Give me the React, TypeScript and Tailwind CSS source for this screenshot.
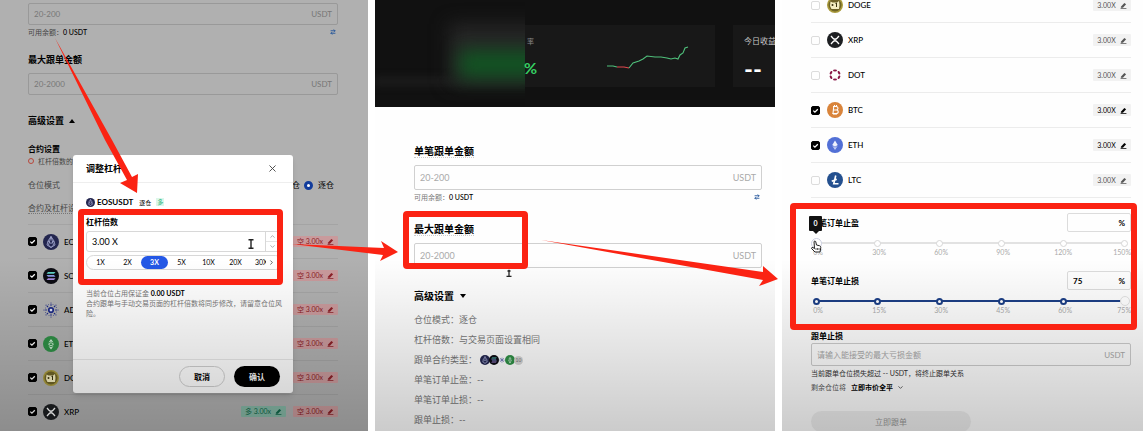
import React from 'react';
import { X, ChevronUp, ChevronDown, ChevronRight, ArrowRightLeft } from 'lucide-react';

const pinned = 'absolute pointer-events-none';

function CoinIcon({ name, className }: { name: string; className: string }) {
  const art: Record<string, React.ReactNode> = {
    EOS: (
      <>
        <circle cx="16" cy="16" r="16" fill="#23264f" />
        <path d="M16 5l-6 9-2 8 8 5 8-5-2-8zM16 5l-5 17 5 5 5-5zM10 14l6 5 6-5" fill="none" stroke="#a9aed6" strokeWidth="1.6" />
      </>
    ),
    SOL: (
      <>
        <circle cx="16" cy="16" r="16" fill="#0b0b12" />
        <path d="M10 8h15l-3 3.500H7z" fill="#5fd0c5" />
        <path d="M7 14.200h15l3 3.500H10z" fill="#8a9be8" />
        <path d="M10 20.500h15l-3 3.500H7z" fill="#a98be0" />
      </>
    ),
    ADA: (
      <g fill="#1c2a86">
        <circle cx="16" cy="16" r="4.500" fill="#dfe3f5" stroke="#1c2a86" strokeWidth="3.500" />
        {[0, 45, 90, 135, 180, 225, 270, 315].map((a) => (
          <g key={a} transform={`rotate(${a} 16 16)`}>
            <circle cx="16" cy="6" r="1.600" />
            <circle cx="16" cy="2" r="1.100" />
            <circle cx="20" cy="5" r="0.900" />
          </g>
        ))}
      </g>
    ),
    ETC: (
      <>
        <circle cx="16" cy="16" r="16" fill="#2f8f46" />
        <path d="M16 6l5 7-5-2-5 2zM11 15l5-2.500 5 2.500v3l-5 2.500-5-2.500zM11 20l5 7 5-7-5 2.500z" fill="#cfeed6" />
        <path d="M13 15.500l3-1 3 1v2l-3 1.200-3-1.200z" fill="#2f8f46" />
      </>
    ),
    DOGE: (
      <>
        <circle cx="16" cy="16" r="16" fill="#a99a3c" />
        <circle cx="16" cy="16" r="13" fill="#6f6427" />
        <path d="M7 9l4 2h9l4-3 1 8-1 8H9l-3-6z" fill="#f5efc0" />
        <circle cx="11" cy="16" r="2" fill="#3b340f" />
        <path d="M17 13l2-1v8" fill="none" stroke="#3b340f" strokeWidth="2" />
      </>
    ),
    XRP: (
      <>
        <circle cx="16" cy="16" r="16" fill="#1d1f22" />
        <path d="M8 8l4 4.500q4 4 8 0L24 8M8 24l4-4.500q4-4 8 0l4 4.500" fill="none" stroke="#fff" strokeWidth="2.600" />
      </>
    ),
    DOT: (
      <g fill="#8a1747">
        <ellipse cx="16" cy="7" rx="4" ry="2.200" />
        <ellipse cx="16" cy="25" rx="4" ry="2.200" />
        <ellipse cx="8" cy="11.500" rx="2.200" ry="3.800" transform="rotate(30 8 11.500)" />
        <ellipse cx="24" cy="11.500" rx="2.200" ry="3.800" transform="rotate(-30 24 11.500)" />
        <ellipse cx="8" cy="20.500" rx="2.200" ry="3.800" transform="rotate(-30 8 20.500)" />
        <ellipse cx="24" cy="20.500" rx="2.200" ry="3.800" transform="rotate(30 24 20.500)" />
      </g>
    ),
    BTC: (
      <>
        <circle cx="16" cy="16" r="16" fill="#d9843b" />
        <path d="M12 9h6q4 0 4 3.500T18 16h-5 5.500q4 0 4 3.500T18 23h-7.500M13.500 9l-1.500 14M15 6v3M19 6v3M14 23v3M18 23v3" fill="none" stroke="#fff" strokeWidth="2.200" />
      </>
    ),
    ETH: (
      <>
        <circle cx="16" cy="16" r="16" fill="#5270d6" />
        <path d="M16 7l5.500 9L16 19.500 10.500 16z" fill="#eef1fd" />
        <path d="M16 26l5.500-8.500L16 21l-5.500-3.500z" fill="#c5cff5" />
      </>
    ),
    LTC: (
      <>
        <circle cx="16" cy="16" r="16" fill="#24508f" />
        <path d="M17.500 7l-4 16.500H23M9.500 18.500l10-4" fill="none" stroke="#fff" strokeWidth="3.200" />
      </>
    ),
  };
  return (
    <svg viewBox="0 0 32 32" className={`shrink-0 ${className}`} aria-hidden="true">
      {art[name]}
    </svg>
  );
}

function Pencil() {
  return (
    <svg viewBox="0 0 12 12" className="size-[7px] shrink-0" aria-hidden="true">
      <path d="M1.500 8L7.500 1.500l3 2.500L5 10H1.500z" fill="currentColor" />
      <path d="M1 11.300h10" stroke="currentColor" strokeWidth="1.400" />
    </svg>
  );
}

function Tick({ label, checked }: { label: string; checked: boolean }) {
  return (
    <span className="relative flex size-[9px] shrink-0">
      <input
        type="checkbox"
        aria-label={label}
        defaultChecked={checked}
        className="peer size-[9px] appearance-none rounded-[2px] border border-[#dcdcdc] checked:border-black checked:bg-black"
      />
      <svg viewBox="0 0 9 9" className="pointer-events-none absolute inset-0 hidden size-[9px] peer-checked:block" aria-hidden="true">
        <path d="M2.300 4.600l1.600 1.500 2.900-2.900" fill="none" stroke="#fff" strokeWidth="1.300" />
      </svg>
    </span>
  );
}

function AmountField({ id, hint, className }: { id: string; hint: string; className: string }) {
  return (
    <div className={`flex items-center rounded-[2px] border px-[5px] ${className}`}>
      <input id={id} placeholder={hint} className="min-w-0 flex-1 bg-transparent outline-none placeholder:text-inherit" />
      <span>USDT</span>
    </div>
  );
}

function Balance() {
  return (
    <div className="flex h-[14px] items-center justify-between text-[7px]">
      <span>
        可用余额：<span className="font-medium text-black">0 USDT</span>
      </span>
      <ArrowRightLeft className="mr-[2px] size-[6px] text-[#20539a]" strokeWidth={3.5} />
    </div>
  );
}

function Shade() {
  return <div className={`${pinned} inset-x-0 bottom-0 h-2/5 bg-linear-to-b from-transparent to-black/20`} />;
}

const LEFT_COINS = ['EOS', 'SOL', 'ADA', 'ETC', 'DOGE', 'XRP'];
const LEVERS = ['1X', '2X', '3X', '5X', '10X', '20X'];

function LeverageDialog() {
  return (
    <div
      role="dialog"
      aria-label="调整杠杆"
      className="absolute top-[155px] left-[73px] flex h-[238px] w-[220px] flex-col rounded-[3px] bg-white text-black shadow-md"
    >
      <header className="flex h-[28px] items-center justify-between border-b border-[#eeeeee] pr-[15px] pl-[13px]">
        <h2 className="text-[9px] font-bold">调整杠杆</h2>
        <button aria-label="关闭" className="text-[#444]">
          <X className="size-[11px]" strokeWidth={2} />
        </button>
      </header>
      <div className="flex-1 pr-[10px] pl-[13px]">
        <div className="mt-[12px] flex h-[14px] items-center text-[8px]">
          <CoinIcon name="EOS" className="size-[9px]" />
          <b className="ml-[2px]">EOSUSDT</b>
          <span className="ml-[6px] text-[6px]">逐仓</span>
          <span className="ml-[5px] bg-[#dcf7ea] px-px text-[6px] leading-[8px] text-[#2db57b]">多</span>
        </div>
        <label htmlFor="lever" className="mt-[6px] block h-[14px] text-[8px] leading-[14px] font-bold">
          杠杆倍数
        </label>
        <div className="mt-[2px] flex h-[21px] rounded-[3px] border border-[#d8d8d8]">
          <input id="lever" defaultValue="3.00 X" className="min-w-0 flex-1 pl-[5px] text-[9px] outline-none" />
          <div className="flex w-[17px] flex-col border-l border-[#d8d8d8] pr-[3px] text-[#777]">
            <button aria-label="增加" className="flex flex-1 items-center justify-center border-b border-[#e4e4e4]">
              <ChevronUp className="size-[7px]" />
            </button>
            <button aria-label="减少" className="flex flex-1 items-center justify-center">
              <ChevronDown className="size-[7px]" />
            </button>
          </div>
        </div>
        <div className="mt-[3px] flex h-[15px] items-center overflow-hidden rounded-full border border-[#d8d8d8] text-[7px]">
          {LEVERS.map((l) => (
            <button
              key={l}
              className={`h-[13px] w-[27px] shrink-0 rounded-full ${l === '3X' ? 'bg-[#2458e6] font-bold text-white' : ''}`}
            >
              {l}
            </button>
          ))}
          <button className="ml-[6px] w-[11px] shrink-0 overflow-hidden whitespace-nowrap">30X</button>
          <ChevronRight className="ml-[2px] size-[7px] shrink-0" />
        </div>
        <div className="mt-[18px] text-[7px] leading-[10px] text-[#777]">
          <p>
            当前仓位占用保证金 <b className="text-black">0.00 USDT</b>
          </p>
          <p>合约跟单与手动交易页面的杠杆倍数将同步修改，请留意仓位风险。</p>
        </div>
      </div>
      <footer className="flex h-[34px] items-center justify-end gap-[9px] border-t border-[#e8e8e8] pr-[13px] text-[8px] font-bold">
        <button className="h-[21px] w-[46px] rounded-full border border-[#cfcfcf]">取消</button>
        <button className="h-[21px] w-[46px] rounded-full bg-black text-white">确认</button>
      </footer>
    </div>
  );
}

function LeftPanel() {
  return (
    <section className="relative overflow-hidden bg-[#b0b0b0] pr-[30px] pl-[28px] text-[8px] text-[#444]">
      <AmountField id="l-single" hint="20-200" className="mt-[3px] h-[22px] border-[#999] text-[#777]" />
      <Balance />
      <label htmlFor="l-max" className="mt-[14px] block h-[14px] text-[9px] leading-[14px] font-bold text-black">
        最大跟单金额
      </label>
      <AmountField id="l-max" hint="20-2000" className="mt-[6px] h-[22px] border-[#999] text-[#777]" />
      <button className="mt-[19px] flex h-[14px] items-center gap-[5px] text-[9px] font-bold text-black">
        高级设置
        <svg viewBox="0 0 6 4" className="h-[4px] w-[6px]" aria-hidden="true">
          <path d="M0 4L3 0l3 4z" />
        </svg>
      </button>
      <h3 className="mt-[14px] h-[14px] leading-[14px] font-bold text-black">合约设置</h3>
      <p className="flex h-[10px] items-center gap-[4px] text-[7px] whitespace-nowrap">
        <span className="size-[6px] shrink-0 rounded-full border border-[#b8483c]" />
        杠杆倍数的
      </p>
      <div className="mt-[12px] flex h-[14px] items-center justify-between">
        <span>仓位模式</span>
        <span className="flex items-center gap-[4px] pr-[4px] text-black">
          <label className="flex items-center gap-[4px]">
            <input type="radio" name="mode" className="size-[9px] appearance-none rounded-full border border-[#777]" />
            全仓
          </label>
          <label className="flex items-center gap-[5px]">
            <input
              type="radio"
              name="mode"
              defaultChecked
              className="size-[9px] appearance-none rounded-full border-[3px] border-[#123c9c] bg-white"
            />
            逐仓
          </label>
        </span>
      </div>
      <p className="mt-[9px] h-[14px] leading-[14px]">
        <span className="border-b border-dotted border-[#777]">合约及杠杆设</span>
      </p>
      <ul className="mt-[9px]">
        {LEFT_COINS.map((c) => (
          <li key={c} className="flex h-[34px] items-center border-t border-[#a4a4a4] text-black">
            <Tick label={c} checked />
            <CoinIcon name={c} className="ml-[6px] size-[16px]" />
            <span className="ml-[5px] font-medium">{c}</span>
            <span className="ml-auto flex gap-[7px] text-[7px]">
              {c === 'XRP' && (
                <button className="flex h-[11px] w-[45px] items-center justify-center gap-[4px] rounded-[1px] bg-[#86b8a6] text-[#11684a]">
                  多 3.00x <Pencil />
                </button>
              )}
              <button className="flex h-[11px] w-[45px] items-center justify-center gap-[4px] rounded-[1px] bg-[#c99a9c] text-[#8c2027]">
                空 3.00x <Pencil />
              </button>
            </span>
          </li>
        ))}
      </ul>
      <LeverageDialog />
      <Shade />
      <svg viewBox="0 0 6 10" className={`${pinned} top-[239px] left-[248px] h-[10px] w-[6px]`} aria-hidden="true">
        <path d="M0.500 0.700h5M0.500 9.300h5M3 0.700v8.600" stroke="#222" strokeWidth="1.400" />
      </svg>
      <div className={`${pinned} top-[209px] left-[78px] h-[76px] w-[205px] rounded-[4px] border-[6px] border-[#fb2313]`} />
    </section>
  );
}

function MiddlePanel() {
  return (
    <section className="relative bg-[#fefefe] text-[9px] text-[#777]">
      <header className="relative flex h-[107px] gap-[18px] overflow-hidden bg-[#111111] pt-[25px] whitespace-nowrap">
        <div className="relative h-[62px] flex-1 bg-[#181818]">
          <div className="absolute -top-[25px] left-0 h-[107px] w-[150px] overflow-hidden bg-[#111111]">
            <div className="absolute top-[76px] left-0 h-[11px] w-full bg-[#1a1a1a] blur-[3px]" />
            <div className="absolute top-[24px] left-[74px] h-[60px] w-[96px] bg-[#262626] blur-[9px]" />
            <div className="absolute top-[50px] left-[84px] h-[28px] w-[90px] bg-[#125423] blur-[9px]" />
          </div>
          <span className="absolute top-[10px] left-[152px] text-[7px] leading-[12px] text-[#888]">率</span>
          <span className="absolute top-[34px] left-[149px] text-[16px] leading-[18px] font-bold text-[#35d063]">%</span>
          <svg viewBox="0 0 82 26" className="absolute top-[20px] right-[26px] h-[26px] w-[82px]" fill="none" strokeWidth="1.100" aria-hidden="true">
            <path d="M0 21l6 0 4 1" stroke="#4fc07b" />
            <path d="M10 22l7 0 5 1" stroke="#e0484e" />
            <path d="M22 23l4-5 6-2 4-2 4-3 8 1 6 0 6 1 4 1 4-1 3 1 2-4 3-2 2-5 3-1" stroke="#4fc07b" />
          </svg>
        </div>
        <div className="h-[62px] w-[42px] overflow-hidden bg-[#181818] pt-[9px] pl-[11px]">
          <p className="text-[8px] leading-[14px] text-[#c8c8c8]">今日收益</p>
          <p className="mt-[12px] flex text-[24px] leading-[18px] font-bold text-white">--</p>
        </div>
      </header>
      <div className="pr-[13px] pl-[39px]">
        <label htmlFor="m-single" className="mt-[36px] block h-[16px] text-[10px] leading-[16px] font-bold text-black">
          <span className="border-b border-dotted border-[#ccc]">单笔跟单金额</span>
        </label>
        <AmountField id="m-single" hint="20-200" className="mt-[6px] h-[25px] border-[#d0d0d0] text-[#aaa]" />
        <Balance />
        <label htmlFor="m-max" className="mt-[17px] block h-[16px] text-[10px] leading-[16px] font-bold text-black">
          <span className="border-b border-dotted border-[#ccc]">最大跟单金额</span>
        </label>
        <AmountField id="m-max" hint="20-2000" className="mt-[6px] h-[25px] border-[#d0d0d0] text-[#aaa]" />
        <button className="mt-[20px] flex h-[16px] items-center gap-[6px] text-[10px] font-bold text-black">
          高级设置
          <svg viewBox="0 0 6 4" className="h-[4px] w-[6px]" aria-hidden="true">
            <path d="M0 0l3 4 3-4z" />
          </svg>
        </button>
        <div className="mt-[6px] leading-[20px]">
          <p>仓位模式：逐仓</p>
          <p>杠杆倍数：与交易页面设置相同</p>
          <div className="flex h-[20px] items-center">
            跟单合约类型：
            <span className="ml-[3px] flex items-center">
              <CoinIcon name="EOS" className="size-[10px]" />
              <CoinIcon name="SOL" className="-ml-px size-[10px]" />
              <CoinIcon name="ADA" className="size-[6px]" />
              <CoinIcon name="ETC" className="size-[10px]" />
              <span className="-ml-px flex size-[9px] items-center justify-center rounded-full bg-[#d5d5d5] text-[5px] text-[#777]">10</span>
            </span>
          </div>
          <p>单笔订单止盈：--</p>
          <p>单笔订单止损：--</p>
          <p>跟单止损：--</p>
        </div>
      </div>
      <Shade />
      <div className={`${pinned} top-[211px] left-[28px] h-[58px] w-[125px] rounded-[4px] border-[6px] border-[#fb2313]`} />
      <svg viewBox="0 0 6 8" className={`${pinned} top-[269px] left-[131px] h-[8px] w-[6px]`} aria-hidden="true">
        <path d="M0.500 7.300h5M1.500 2h3M3 0.700v6.600" stroke="#222" strokeWidth="1.300" />
      </svg>
    </section>
  );
}

const RIGHT_COINS = [
  { name: 'DOGE', on: false },
  { name: 'XRP', on: false },
  { name: 'DOT', on: false },
  { name: 'BTC', on: true },
  { name: 'ETH', on: true },
  { name: 'LTC', on: false },
];

function RatioSlider({ id, title, value, marks, filled }: { id: string; title: string; value: string; marks: number[]; filled: boolean }) {
  const end = marks.length - 1;
  const nodeStyle = (i: number) => {
    if (filled) return i === end ? 'size-[10px] border border-[#e2e2e2]' : 'size-[7px] border-2 border-[#1c3f86]';
    return i === 0 ? 'size-[11px] shrink-0 border border-[#cdd0e2]' : 'size-[7px] border border-[#d6d6d6]';
  };
  return (
    <div className="h-[58px]">
      <div className="flex h-[19px] items-center justify-between">
        <label htmlFor={id} className="text-[8px] font-bold text-black">
          {title}
        </label>
        <div className="flex h-[19px] w-[64px] items-center rounded-[2px] border border-[#dcdcdc] px-[5px] text-[8px] font-bold text-black">
          <input id={id} defaultValue={value} className="min-w-0 flex-1 bg-transparent outline-none" />
          <span>%</span>
        </div>
      </div>
      <div className="relative mt-[6px] flex h-[10px] items-center justify-between pr-px">
        <div className={`absolute inset-x-[4px] top-[4px] h-[2px] ${filled ? 'bg-[#1c3f86]' : 'bg-[#e2e2e2]'}`} />
        {marks.map((m, i) => (
          <span key={m} className="relative flex w-[10px] items-center justify-center">
            <span className={`rounded-full bg-white ${nodeStyle(i)}`} />
          </span>
        ))}
        <input type="range" aria-label={title} min={0} max={marks[end]} defaultValue={value || '0'} className="absolute inset-0 size-full opacity-0" />
      </div>
      <div className="grid grid-cols-[10px_1fr_1fr_1fr_1fr_1fr] text-[7px] leading-[9px] text-[#aaa]">
        {marks.map((m, i) => (
          <span key={m} className={i === 0 ? 'flex w-[14px] justify-center' : 'flex justify-end'}>
            <span className={i === 0 || i === end ? '' : '-mr-[3px]'}>{m}%</span>
          </span>
        ))}
      </div>
    </div>
  );
}

function RightPanel() {
  return (
    <section className="relative bg-[#fefefe] pr-[12px] pl-[29px] text-[8px] text-[#555]">
      <ul className="-mt-[12px]">
        {RIGHT_COINS.map(({ name, on }) => (
          <li key={name} className="flex h-[35px] items-center border-b border-[#ececec]">
            <Tick label={name} checked={on} />
            <CoinIcon name={name} className="ml-[7px] size-[16px]" />
            <span className="ml-[5px] font-medium text-black">{name}</span>
            <button
              className={`ml-auto flex h-[12px] w-[38px] items-center justify-center gap-[4px] rounded-[1px] bg-[#f2f2f2] text-[7px] ${
                on ? 'text-black' : 'text-[#555]'
              }`}
            >
              3.00X <Pencil />
            </button>
          </li>
        ))}
      </ul>
      <div className="mt-[15px]">
        <RatioSlider id="profit" title="单笔订单止盈" value="" marks={[0, 30, 60, 90, 120, 150]} filled={false} />
        <RatioSlider id="loss" title="单笔订单止损" value="75" marks={[0, 15, 30, 45, 60, 75]} filled />
      </div>
      <label htmlFor="stop" className="block h-[14px] leading-[14px] font-bold text-black">
        跟单止损
      </label>
      <AmountField id="stop" hint="请输入能接受的最大亏损金额" className="h-[23px] border-[#cccccc] text-[#a8a8a8]" />
      <p className="h-[14px] text-[7px] leading-[14px] text-[#333]">当前跟单仓位损失超过 -- USDT，将终止跟单关系</p>
      <div className="flex h-[14px] items-center text-[7px]">
        <label htmlFor="rest">剩余仓位将</label>
        <select id="rest" className="ml-[5px] appearance-none bg-transparent font-bold text-black">
          <option>立即市价全平</option>
        </select>
        <ChevronDown className="ml-[4px] size-[7px]" strokeWidth={3} />
      </div>
      <button className="mt-[17px] h-[21px] w-1/2 rounded-full bg-[#efefef] text-[#999]">立即跟单</button>
      <Shade />
      <div className={`${pinned} top-[203px] right-[6px] left-[8px] h-[127px] rounded-[4px] border-[6px] border-[#fb2313]`} />
      <div className={`${pinned} top-[216px] left-[27px] flex flex-col items-center`}>
        <span className="flex h-[15px] w-[13px] items-center justify-center rounded-[1px] bg-[#111] text-[7px] font-bold text-white">0</span>
        <svg viewBox="0 0 6 3" className="h-[3px] w-[6px]" aria-hidden="true">
          <path d="M0 0h6L3 3z" fill="#111" />
        </svg>
      </div>
      <svg viewBox="0 0 12 14" className={`${pinned} top-[240px] left-[28px] h-[14px] w-[12px]`} aria-hidden="true">
        <path d="M4 1.500q1-1 1.700 0L6.500 5l3 .700q1.500.500 1.300 2L10 12H5L1.500 8.500q0-1.400 1.500-.900l1.500 1z" fill="#fff" stroke="#222" strokeWidth="1" />
        <path d="M6 8v2M7.500 8v2M9 8v2" stroke="#222" strokeWidth="0.700" />
      </svg>
    </section>
  );
}

export default function App() {
  return (
    <main className="relative grid h-screen grid-cols-[368fr_400fr_361fr] gap-[7px] overflow-hidden bg-white font-['Lato','Noto_Sans_CJK_SC',sans-serif]">
      <LeftPanel />
      <MiddlePanel />
      <RightPanel />
      <svg viewBox="0 0 1143 431" preserveAspectRatio="none" className={`${pinned} inset-0 size-full`} fill="#fb2313" aria-hidden="true">
        <path d="M55 38L112 140 132 177 138 174 137 193 120 183 127 180 105 140z" />
        <path d="M292 244L384 248 381 241 398 252 380 261 383 255z" />
        <path d="M541 240L763 272 763 266 778 279 759 286 763 280z" />
      </svg>
    </main>
  );
}
